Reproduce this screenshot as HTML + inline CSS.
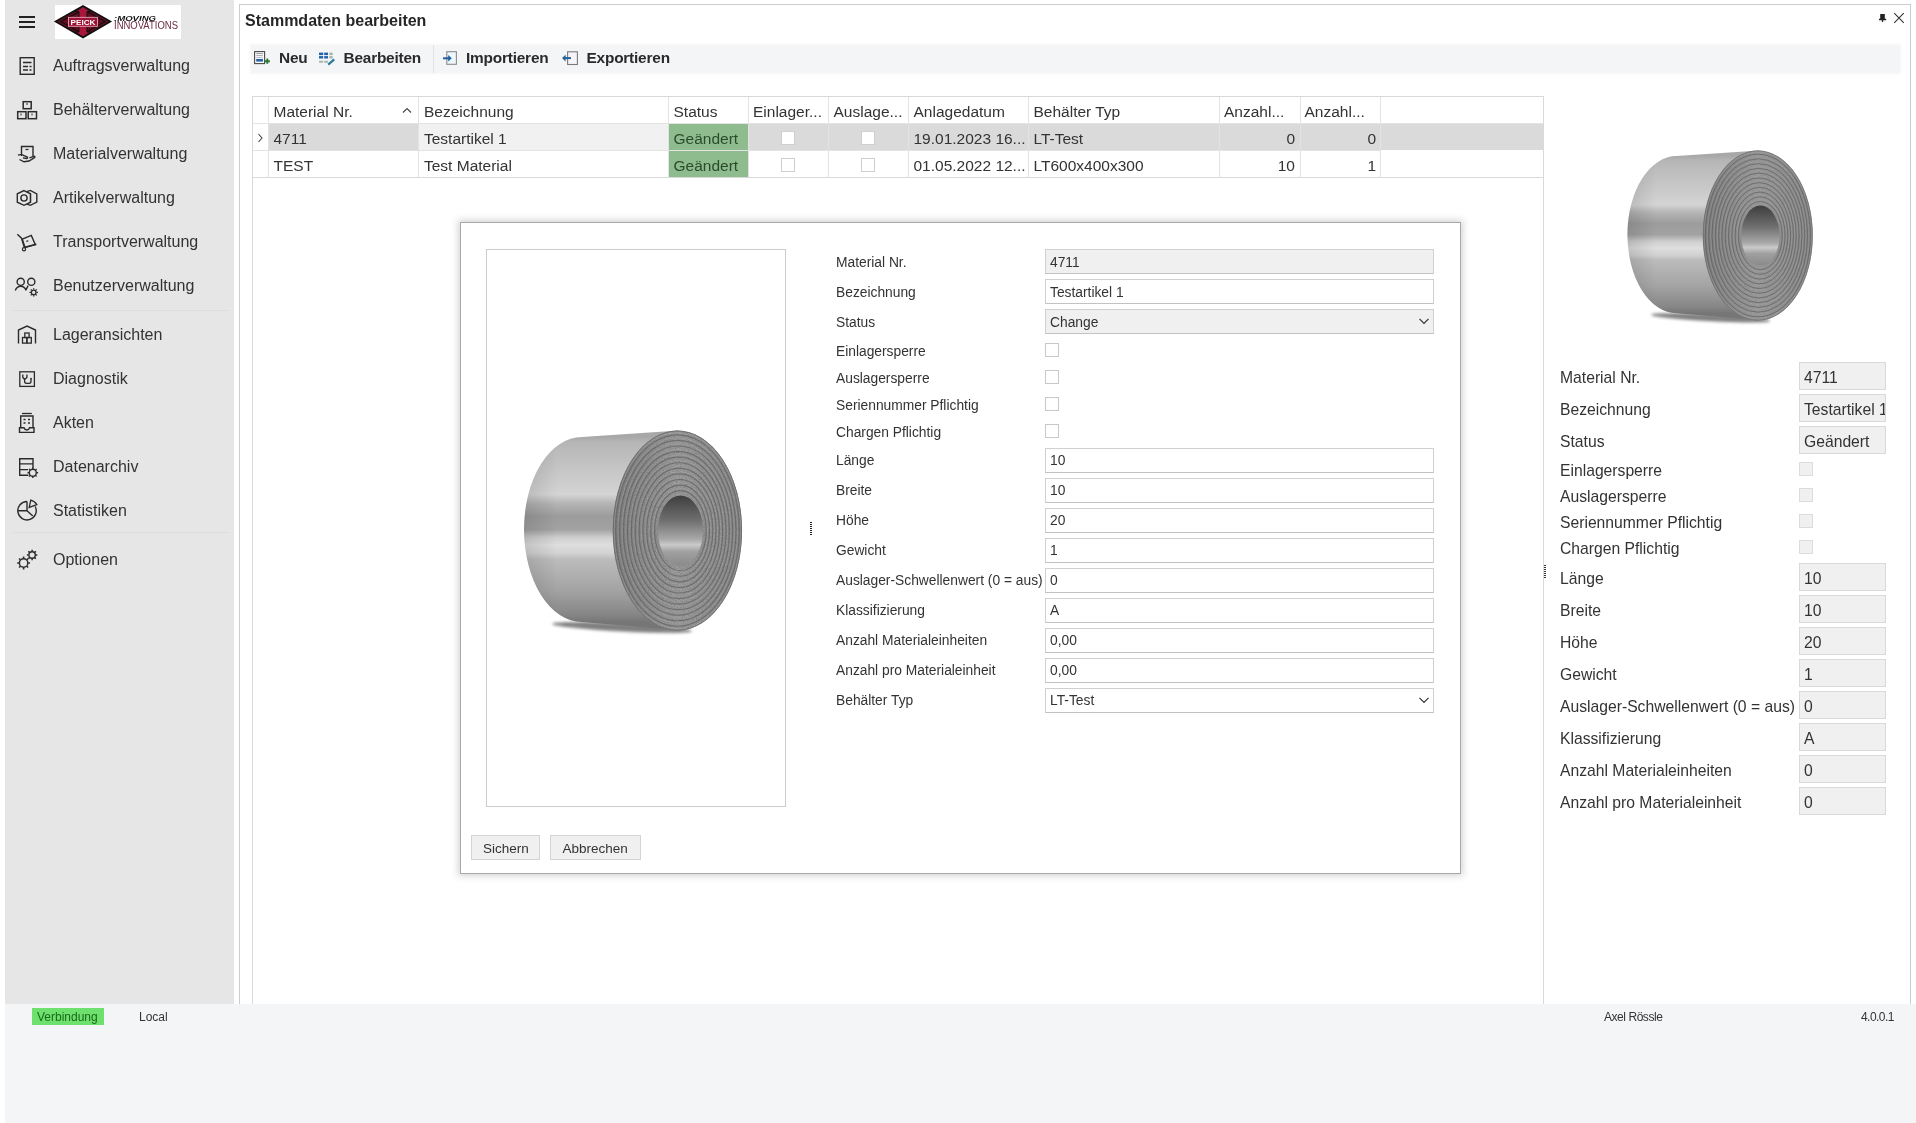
<!DOCTYPE html>
<html><head><meta charset="utf-8">
<style>
*{box-sizing:border-box;margin:0;padding:0}
html,body{width:1916px;height:1123px;overflow:hidden;background:#fff;font-family:"Liberation Sans",sans-serif;color:#333}
.a{position:absolute}
.t{position:absolute;white-space:nowrap;line-height:1}
#side{left:5px;top:0;width:229px;height:1004px;background:#e6e6e6}
.mi{font-size:16px;left:53px;color:#333}
.ico{position:absolute;left:14px;width:26px;height:24px}
.sep{position:absolute;left:13px;width:216px;height:1px;background:#dcdcdc}
#status{left:5px;top:1004px;width:1911px;height:119px;background:#f4f5f7}
.st{font-size:12px;color:#333}
/* grid */
.gl{position:absolute;background:#e3e3e3}
.gt{font-size:15.5px;color:#333}
/* dialog */
.dl{font-size:13.8px;color:#333;left:836px}
.fld{position:absolute;left:1045px;width:389px;height:25px;border:1px solid #d0d0d0;border-bottom-color:#c2c2c2;background:#fff}
.fv{font-size:13.8px;color:#333;left:1050px}
.cb{position:absolute;width:14px;height:14px;border:1px solid #c9c9c9;background:#fff}
.rl{font-size:15.7px;color:#333;left:1560px}
.rf{position:absolute;left:1799px;width:87px;height:28px;border:1px solid #d9d9d9;background:#f0f0f0}
.rv{font-size:15.7px;color:#333;left:1804px}
.rcb{position:absolute;left:1799px;width:14px;height:14px;border:1px solid #dcdcdc;background:#f0f0f0}
body{filter:contrast(1.0001)}
</style></head><body>

<!-- SIDEBAR -->
<div id="side" class="a"></div>
<div class="a" style="left:19px;top:16px;width:16px;height:2px;background:#222"></div>
<div class="a" style="left:19px;top:21px;width:16px;height:2px;background:#222"></div>
<div class="a" style="left:19px;top:26px;width:16px;height:2px;background:#222"></div>
<div class="a" style="left:55px;top:5px;width:126px;height:34px;background:#fff"></div>


<!-- SIDEBAR ICONS -->
<svg class="a" style="left:0;top:0" width="240" height="600" viewBox="0 0 240 600" fill="none" stroke="#2b2b2b" stroke-width="1.4">
 <!-- Auftrags -->
 <rect x="20.2" y="57.7" width="14" height="16.6"/>
 <path d="M23 62.5h8.5M23 66.5h5M29.5 66.5h2M23 70h5M29.5 70h2" stroke-width="1.3"/>
 <!-- Behaelter -->
 <rect x="23.2" y="101.7" width="8" height="7" stroke-width="1.5"/>
 <rect x="17.7" y="111.7" width="8.3" height="7" stroke-width="1.5"/>
 <rect x="28.2" y="111.7" width="8.3" height="7" stroke-width="1.5"/>
 <path d="M27 103v2M21 113.5v2M32 113.5v2" stroke-width="1"/>
 <!-- Material -->
 <path d="M21.5 156V146.5h11.5V156"/>
 <path d="M25.5 149.5h3" stroke-width="1.2"/>
 <path d="M18 155.2c2-0.8 4-0.8 6 0.5l3 1.2c1 .5.5 1.8-.6 1.6l-3.5-.6M19.5 159.5l4.5 2.3 5-.8 5.5-3.3c.8-.6.2-1.7-.8-1.4l-4.3 1.6"/>
 <!-- Artikel -->
 <path d="M24 190.6l6.5 3.2v8.4l-6.5 3.1-6.7-3.1v-8.4z"/>
 <circle cx="24" cy="198" r="3.1"/>
 <path d="M26.8 191.6l3.5-1.2 6.5 3.4v8.3l-6.5 3.2-3.3-1.1"/>
 <path d="M30.5 193.8v8.4" stroke-width="1.2"/>
 <!-- Transport -->
 <path d="M17.3 234.3l4.2 3.9 2.8 9.2"/>
 <path d="M22.3 239.2l9-3.8 4 9.2-10.3 2.8z"/>
 <path d="M25 247.3l11.3-3" />
 <circle cx="24" cy="249.3" r="1.6" stroke-width="1.2"/>
 <path d="M26.3 241.4l2.1-.7" stroke-width="1.2"/>
 <!-- Benutzer -->
 <circle cx="20.7" cy="281.8" r="3.6"/>
 <circle cx="31.3" cy="281.8" r="3.6"/>
 <path d="M15.3 290.5c1-2.6 3-4.2 5.4-4.2s4.4 1.6 5.4 4.2M26.1 289.6l2-4"/>
 <circle cx="33.7" cy="292.4" r="2.3" stroke-width="1.3"/>
 <path d="M33.7 288.2v1.4M33.7 295.2v1.4M29.5 292.4h1.4M36.5 292.4h1.4M30.7 289.4l1 1M35.7 294.4l1 1M30.7 295.4l1-1M35.7 290.4l1-1" stroke-width="1.3"/>
 <!-- Lager -->
 <path d="M18.5 343.5v-13.5l8.5-4 8.5 4v13.5"/>
 <rect x="22.5" y="337.5" width="4.3" height="5.6" stroke-width="1.3"/>
 <rect x="27" y="337.5" width="4.3" height="5.6" stroke-width="1.3"/>
 <rect x="24.8" y="333" width="4.3" height="4.6" stroke-width="1.3"/>
 <!-- Diagnostik -->
 <rect x="19.8" y="371.8" width="14.6" height="14.6" stroke-width="1.3"/>
 <path d="M22.8 374.6v2.9l1.8 2 2.3-2v-2.9M24.6 379.5v1.8c0 1.3.7 2 1.8 2h2.8c1.2 0 1.8-.7 1.8-2v-2.4" stroke-width="1.3"/>
 <circle cx="31" cy="378.6" r="0.9" fill="#2b2b2b" stroke="none"/>
 <!-- Akten -->
 <path d="M22 413.5h9.8" stroke-width="1.3"/>
 <path d="M20.7 428v-12h12.3v12"/>
 <path d="M19.5 427.8h4.5c.5 1.5 1.5 2.2 2.8 2.2s2.3-.7 2.8-2.2h4.4v4.6h-14.5z"/>
 <path d="M23.5 419.5h2M28 419.5h2M23.5 423h2M28 423h2" stroke-width="1.5"/>
 <!-- Datenarchiv -->
 <path d="M28.3 475.3H19.7V458.7H33V468.3M19.7 463.9H33M19.7 469.6H28"/>
 <circle cx="32.8" cy="472.8" r="3.5" stroke-width="1.4"/>
 <path d="M32.8 467.5v1.5M32.8 476.6v1.5M27.5 472.8h1.5M36.6 472.8h1.5M29 469l1 1M35.6 475.6l1 1M29 476.6l1-1M35.6 470l1-1" stroke-width="1.4"/>
 <!-- Statistiken -->
 <path d="M27 501.5A9.2 9.2 0 1 0 35.2 506.5"/>
 <path d="M27 501.5v9.2H18M27 510.7l5.8 5.4"/>
 <path d="M29.2 507.4l1.6-7.3a9.5 9.5 0 0 1 6 4.5z" stroke-width="1.3"/>
 <!-- Optionen -->
 <circle cx="23.6" cy="563" r="4.2" stroke-width="1.4"/>
 <path d="M23.6 556.6v1.8M23.6 567.6v1.8M17.2 563h1.8M28.2 563h1.8M19.1 558.5l1.3 1.3M26.8 566.2l1.3 1.3M19.1 567.5l1.3-1.3M26.8 559.8l1.3-1.3" stroke-width="1.6"/>
 <circle cx="32.1" cy="555" r="3.2" stroke-width="1.4"/>
 <path d="M32.1 549.8v1.6M32.1 558.6v1.6M26.9 555h1.6M35.7 555h1.6M28.4 551.3l1.1 1.1M34.7 557.6l1.1 1.1M28.4 558.7l1.1-1.1M34.7 552.4l1.1-1.1" stroke-width="1.5"/>
</svg>


<!-- LOGO -->
<svg class="a" style="left:0;top:0" width="200" height="45" viewBox="0 0 200 45">
 <polygon points="55.5,21.5 83,6 110.5,21.5 83,37.5" fill="#5e0f22" stroke="#111" stroke-width="1.6"/>
 <polygon points="61,21.5 83,9.5 105,21.5 83,34" fill="none" stroke="#1a0a0e" stroke-width="1.2"/>
 <polygon points="75.5,11.5 83,6.5 90.5,11.5 87,11.5 87,32 90.5,32 83,37 75.5,32 79,32 79,11.5" fill="#a8173a" stroke="#111" stroke-width="1"/>
 <rect x="68.5" y="17.3" width="29" height="9" fill="#9c1434" stroke="#f2b3c2" stroke-width="0.8"/>
 <text x="83" y="24.6" font-family="Liberation Sans" font-weight="700" font-size="6.6" fill="#fff" text-anchor="middle" textLength="25" lengthAdjust="spacingAndGlyphs">PEICK</text>
 <text x="114" y="20.9" font-family="Liberation Sans" font-style="italic" font-weight="700" font-size="7.8" fill="#111" textLength="42" lengthAdjust="spacingAndGlyphs">:MOVING</text>
 <text x="114" y="28.7" font-family="Liberation Sans" font-size="10.4" fill="#6e2a40" textLength="64" lengthAdjust="spacingAndGlyphs">INNOVATIONS</text>
</svg>
<!-- PIN / CLOSE -->
<svg class="a" style="left:1870px;top:8px" width="40" height="20" viewBox="1870 8 40 20">
 <rect x="1880.2" y="14" width="4.6" height="5" fill="#222"/>
 <path d="M1879 19.5h7.2M1882.5 19.5v2.5" stroke="#222" stroke-width="1.3"/>
 <path d="M1894.2 13.2l9.6 9.6M1903.8 13.2l-9.6 9.6" stroke="#333" stroke-width="1.1"/>
</svg>

<div class="t mi" style="top:58.0px">Auftragsverwaltung</div>
<div class="t mi" style="top:102.0px">Behälterverwaltung</div>
<div class="t mi" style="top:146.0px">Materialverwaltung</div>
<div class="t mi" style="top:190.0px">Artikelverwaltung</div>
<div class="t mi" style="top:234.0px">Transportverwaltung</div>
<div class="t mi" style="top:278.0px">Benutzerverwaltung</div>
<div class="sep" style="top:310px"></div>
<div class="t mi" style="top:327.0px">Lageransichten</div>
<div class="t mi" style="top:371.0px">Diagnostik</div>
<div class="t mi" style="top:415.0px">Akten</div>
<div class="t mi" style="top:459.0px">Datenarchiv</div>
<div class="t mi" style="top:503.0px">Statistiken</div>
<div class="sep" style="top:532px"></div>
<div class="t mi" style="top:552.0px">Optionen</div>

<!-- MAIN WINDOW -->
<div class="a" style="left:239px;top:4px;width:1672px;height:1000px;border:1px solid #cdcdcd;border-bottom:none"></div>
<div class="t" style="left:245px;top:12.5px;font-size:16px;font-weight:700;color:#262626">Stammdaten bearbeiten</div>

<!-- toolbar -->
<div class="a" style="left:251px;top:45px;width:1649px;height:28px;background:#f4f5f7;box-shadow:0 0 3px 1px rgba(0,0,0,0.035)"></div>
<div class="a" style="left:433px;top:45px;width:1px;height:28px;background:#e4e4e4"></div>
<!-- TOOLBAR ICONS -->
<svg class="a" style="left:240px;top:40px" width="360" height="35" viewBox="240 40 360 35">
 <rect x="254.6" y="51.6" width="10" height="12" fill="#fbfbfb" stroke="#4a4a4a" stroke-width="1.1"/>
 <path d="M256.3 53.6h6.6" stroke="#8c8c8c" stroke-width="0.9"/>
 <path d="M256.3 55.6h6.6" stroke="#a4a4a4" stroke-width="0.9"/>
 <path d="M256.3 57.6h6.6" stroke="#b7bde6" stroke-width="1"/>
 <rect x="256.2" y="59" width="6.8" height="2.6" fill="#2763a8"/>
 <path d="M267.3 58.6v5.2M264.7 61.2h5.2" stroke="#2a7a2e" stroke-width="1.9"/>
 <g fill="#1f62ab">
  <rect x="319" y="52.6" width="4.2" height="2.5"/><rect x="324.2" y="52.6" width="3.8" height="2.5"/>
  <rect x="319" y="56.1" width="4.2" height="2.4"/><rect x="324.2" y="56.1" width="3.8" height="2.4"/>
 </g>
 <g fill="#a9b4ae">
  <rect x="329.3" y="52.6" width="3.4" height="2.5"/><rect x="329.3" y="56.1" width="3.4" height="2.4"/>
  <rect x="319" y="60.8" width="4.2" height="1.9"/><rect x="324.2" y="60.8" width="3.8" height="1.9"/>
 </g>
 <path d="M328.2 64.6l6-5.2" stroke="#2a7d9c" stroke-width="2.3"/>
 <rect x="446.8" y="51.7" width="9.6" height="12.6" fill="#eef8fa" stroke="#8a8a8a" stroke-width="1.1"/>
 <path d="M443 58.3h6" stroke="#22609f" stroke-width="2"/>
 <path d="M448.2 55l3.6 3.3-3.6 3.3z" fill="#22609f"/>
 <rect x="567.6" y="51.8" width="9.8" height="12.7" fill="#f6f4fa" stroke="#7a7a7a" stroke-width="1.1"/>
 <path d="M565 58.1h6" stroke="#22639a" stroke-width="2"/>
 <path d="M565.6 54.8l-3.6 3.3 3.6 3.3z" fill="#22639a"/>
</svg>

<div class="t" style="left:279px;top:50px;font-size:15.4px;letter-spacing:-0.2px;font-weight:700;color:#2a2a2a">Neu</div>
<div class="t" style="left:343.5px;top:50px;font-size:15.4px;letter-spacing:-0.2px;font-weight:700;color:#2a2a2a">Bearbeiten</div>
<div class="t" style="left:466px;top:50px;font-size:15.4px;letter-spacing:-0.2px;font-weight:700;color:#2a2a2a">Importieren</div>
<div class="t" style="left:586.5px;top:50px;font-size:15.4px;letter-spacing:-0.2px;font-weight:700;color:#2a2a2a">Exportieren</div>

<!-- GRID -->
<div class="a" style="left:252px;top:96px;width:1292px;height:908px;border:1px solid #d9d9d9;border-bottom:none"></div>


<!-- GRID CONTENT -->
<div class="a" style="left:268px;top:123px;width:1275px;height:27px;background:#dadada"></div>
<div class="a" style="left:419px;top:123px;width:249px;height:27px;background:#f1f1f1"></div>
<div class="a" style="left:669px;top:123px;width:79px;height:54px;background:#8fbc8f"></div>
<div class="gl" style="left:253px;top:123px;width:1290px;height:1px"></div>
<div class="gl" style="left:253px;top:150px;width:1127px;height:1px"></div>
<div class="gl" style="left:253px;top:177px;width:1290px;height:1px;background:#d9d9d9"></div>
<div class="gl" style="left:268px;top:97px;width:1px;height:80px"></div>
<div class="gl" style="left:418px;top:97px;width:1px;height:80px"></div>
<div class="gl" style="left:668px;top:97px;width:1px;height:80px"></div>
<div class="gl" style="left:748px;top:97px;width:1px;height:80px"></div>
<div class="gl" style="left:828px;top:97px;width:1px;height:80px"></div>
<div class="gl" style="left:908px;top:97px;width:1px;height:80px"></div>
<div class="gl" style="left:1028px;top:97px;width:1px;height:80px"></div>
<div class="gl" style="left:1219px;top:97px;width:1px;height:80px"></div>
<div class="gl" style="left:1300px;top:97px;width:1px;height:80px"></div>
<div class="gl" style="left:1380px;top:97px;width:1px;height:80px"></div>
<svg class="a" style="left:252px;top:96px" width="170" height="60" fill="none" stroke="#444" stroke-width="1.1">
 <path d="M151 16.5l4-4 4 4"/>
 <path d="M6.5 38l3.5 4-3.5 4"/>
</svg>
<div class="t gt" style="left:273.5px;top:104px">Material Nr.</div>
<div class="t gt" style="left:424px;top:104px">Bezeichnung</div>
<div class="t gt" style="left:673.5px;top:104px">Status</div>
<div class="t gt" style="left:753px;top:104px">Einlager...</div>
<div class="t gt" style="left:833.5px;top:104px">Auslage...</div>
<div class="t gt" style="left:913.5px;top:104px">Anlagedatum</div>
<div class="t gt" style="left:1033.5px;top:104px">Behälter Typ</div>
<div class="t gt" style="left:1224px;top:104px">Anzahl...</div>
<div class="t gt" style="left:1304.5px;top:104px">Anzahl...</div>

<div class="t gt" style="left:273.5px;top:131px">4711</div>
<div class="t gt" style="left:424px;top:131px">Testartikel 1</div>
<div class="t gt" style="left:673.5px;top:131px;color:#2c4a2c">Geändert</div>
<div class="cb" style="left:781px;top:131px;border-color:#cfcfcf"></div>
<div class="cb" style="left:861px;top:131px;border-color:#cfcfcf"></div>
<div class="t gt" style="left:913.5px;top:131px">19.01.2023 16...</div>
<div class="t gt" style="left:1033.5px;top:131px">LT-Test</div>
<div class="t gt" style="left:1219px;top:131px;width:76px;text-align:right">0</div>
<div class="t gt" style="left:1300px;top:131px;width:76px;text-align:right">0</div>

<div class="t gt" style="left:273.5px;top:158px">TEST</div>
<div class="t gt" style="left:424px;top:158px">Test Material</div>
<div class="t gt" style="left:673.5px;top:158px;color:#2c4a2c">Geändert</div>
<div class="cb" style="left:781px;top:158px;border-color:#cfcfcf"></div>
<div class="cb" style="left:861px;top:158px;border-color:#cfcfcf"></div>
<div class="t gt" style="left:913.5px;top:158px">01.05.2022 12...</div>
<div class="t gt" style="left:1033.5px;top:158px">LT600x400x300</div>
<div class="t gt" style="left:1219px;top:158px;width:76px;text-align:right">10</div>
<div class="t gt" style="left:1300px;top:158px;width:76px;text-align:right">1</div>

<!-- DIALOG -->
<div class="a" style="left:460px;top:222px;width:1001px;height:652px;background:#fff;border:1px solid #a8a8a8;box-shadow:0 0 7px 2px rgba(0,0,0,0.17)"></div>
<div class="a" style="left:486px;top:249px;width:300px;height:558px;border:1px solid #cdcdcd"></div>
<div class="t dl" style="top:256.3px">Material Nr.</div>
<div class="t dl" style="top:286.3px">Bezeichnung</div>
<div class="t dl" style="top:316.3px">Status</div>
<div class="t dl" style="top:345.3px">Einlagersperre</div>
<div class="t dl" style="top:372.3px">Auslagersperre</div>
<div class="t dl" style="top:399.3px">Seriennummer Pflichtig</div>
<div class="t dl" style="top:426.3px">Chargen Pflichtig</div>
<div class="t dl" style="top:454.3px">Länge</div>
<div class="t dl" style="top:484.3px">Breite</div>
<div class="t dl" style="top:514.3px">Höhe</div>
<div class="t dl" style="top:544.3px">Gewicht</div>
<div class="t dl" style="top:574.3px">Auslager-Schwellenwert (0 = aus)</div>
<div class="t dl" style="top:604.3px">Klassifizierung</div>
<div class="t dl" style="top:634.3px">Anzahl Materialeinheiten</div>
<div class="t dl" style="top:664.3px">Anzahl pro Materialeinheit</div>
<div class="t dl" style="top:694.3px">Behälter Typ</div>
<div class="fld" style="top:249px;background:#f0f0f0"></div>
<div class="t fv" style="top:256.3px">4711</div>
<div class="fld" style="top:279px;background:#fff"></div>
<div class="t fv" style="top:286.3px">Testartikel 1</div>
<div class="fld" style="top:309px;background:#f0f0f0"></div>
<div class="t fv" style="top:316.3px">Change</div>
<svg class="a" style="left:1418px;top:317px" width="12" height="8" fill="none" stroke="#333" stroke-width="1.2"><path d="M1.5 1.8l4.5 4.5 4.5-4.5"/></svg>
<div class="fld" style="top:448px;background:#fff"></div>
<div class="t fv" style="top:454.3px">10</div>
<div class="fld" style="top:478px;background:#fff"></div>
<div class="t fv" style="top:484.3px">10</div>
<div class="fld" style="top:508px;background:#fff"></div>
<div class="t fv" style="top:514.3px">20</div>
<div class="fld" style="top:538px;background:#fff"></div>
<div class="t fv" style="top:544.3px">1</div>
<div class="fld" style="top:568px;background:#fff"></div>
<div class="t fv" style="top:574.3px">0</div>
<div class="fld" style="top:598px;background:#fff"></div>
<div class="t fv" style="top:604.3px">A</div>
<div class="fld" style="top:628px;background:#fff"></div>
<div class="t fv" style="top:634.3px">0,00</div>
<div class="fld" style="top:658px;background:#fff"></div>
<div class="t fv" style="top:664.3px">0,00</div>
<div class="fld" style="top:688px;background:#fff"></div>
<div class="t fv" style="top:694.3px">LT-Test</div>
<svg class="a" style="left:1418px;top:696px" width="12" height="8" fill="none" stroke="#333" stroke-width="1.2"><path d="M1.5 1.8l4.5 4.5 4.5-4.5"/></svg>
<div class="cb" style="left:1045px;top:343px"></div>
<div class="cb" style="left:1045px;top:370px"></div>
<div class="cb" style="left:1045px;top:397px"></div>
<div class="cb" style="left:1045px;top:424px"></div>
<div class="a" style="left:810px;top:522px;width:2px;height:1px;background:#222"></div><div class="a" style="left:810px;top:524px;width:2px;height:1px;background:#222"></div><div class="a" style="left:810px;top:526px;width:2px;height:1px;background:#222"></div><div class="a" style="left:810px;top:528px;width:2px;height:1px;background:#222"></div><div class="a" style="left:810px;top:530px;width:2px;height:1px;background:#222"></div><div class="a" style="left:810px;top:532px;width:2px;height:1px;background:#222"></div><div class="a" style="left:810px;top:534px;width:2px;height:1px;background:#222"></div>
<div class="a" style="left:471px;top:835px;width:69px;height:25px;background:#f0f0f0;border:1px solid #d4d4d4"></div>
<div class="a" style="left:550px;top:835px;width:91px;height:25px;background:#f0f0f0;border:1px solid #d4d4d4"></div>
<div class="t" style="left:483px;top:841.6px;font-size:13.5px;color:#333">Sichern</div>
<div class="t" style="left:562.5px;top:841.6px;font-size:13.5px;color:#333">Abbrechen</div>
<svg class="a" style="left:500px;top:410px" width="270.0" height="240.0" viewBox="0 0 270 240">
<defs>
 <linearGradient id="c1b" gradientUnits="userSpaceOnUse" x1="0" y1="27" x2="0" y2="212">
  <stop offset="0" stop-color="#a8a8a8"/>
  <stop offset="0.03" stop-color="#b6b6b6"/>
  <stop offset="0.17" stop-color="#c5c5c5"/>
  <stop offset="0.31" stop-color="#d4d4d4"/>
  <stop offset="0.36" stop-color="#b4b4b4"/>
  <stop offset="0.43" stop-color="#9c9c9c"/>
  <stop offset="0.5" stop-color="#a2a2a2"/>
  <stop offset="0.545" stop-color="#cfcfcf"/>
  <stop offset="0.585" stop-color="#dedede"/>
  <stop offset="0.63" stop-color="#d2d2d2"/>
  <stop offset="0.66" stop-color="#bcbcbc"/>
  <stop offset="0.83" stop-color="#a3a3a3"/>
  <stop offset="0.96" stop-color="#868686"/>
  <stop offset="1" stop-color="#767676"/>
 </linearGradient>
 <linearGradient id="c1l" gradientUnits="userSpaceOnUse" x1="24" y1="0" x2="120" y2="0">
  <stop offset="0" stop-color="#000" stop-opacity="0.12"/>
  <stop offset="0.35" stop-color="#000" stop-opacity="0"/>
  <stop offset="1" stop-color="#000" stop-opacity="0"/>
 </linearGradient>
 <linearGradient id="c1v" gradientUnits="userSpaceOnUse" x1="113" y1="0" x2="242" y2="0">
  <stop offset="0" stop-color="#7c7c7c"/>
  <stop offset="0.5" stop-color="#9a9a9a"/>
  <stop offset="1" stop-color="#858585"/>
 </linearGradient>
 <linearGradient id="c1h" x1="0" y1="0" x2="0" y2="1">
  <stop offset="0" stop-color="#3e3e3e"/>
  <stop offset="0.35" stop-color="#6e6e6e"/>
  <stop offset="0.62" stop-color="#a8a8a8"/>
  <stop offset="0.7" stop-color="#cacaca"/>
  <stop offset="0.8" stop-color="#a0a0a0"/>
  <stop offset="1" stop-color="#8a8a8a"/>
 </linearGradient>
 <filter id="c1f" x="-20%" y="-200%" width="140%" height="500%"><feGaussianBlur stdDeviation="4"/></filter>
 <filter id="c1n" x="0" y="0" width="100%" height="100%"><feTurbulence type="fractalNoise" baseFrequency="0.85" numOctaves="1" seed="7"/><feColorMatrix type="matrix" values="0 0 0 0 0.2  0 0 0 0 0.2  0 0 0 0 0.2  3 0 0 0 -1.35"/></filter>
 <clipPath id="c1c"><ellipse cx="177.4" cy="120.6" rx="64.6" ry="100"/></clipPath>
</defs>
<filter id="c1g" x="-20%" y="-300%" width="140%" height="700%"><feGaussianBlur stdDeviation="1.6"/></filter><ellipse cx="122" cy="217.5" rx="70" ry="4" fill="#000" opacity="0.5" filter="url(#c1g)" transform="rotate(3 122 217.5)"/>
<path d="M179 20.6L82 27A58 92.5 0 0 0 82 212L179 220.6Z" fill="url(#c1b)"/>
<path d="M179 20.6L82 27A58 92.5 0 0 0 82 212L179 220.6Z" fill="url(#c1l)"/>
<ellipse cx="177.4" cy="120.6" rx="64.6" ry="100" fill="url(#c1v)"/>
<g clip-path="url(#c1c)"><ellipse cx="180.4" cy="120.7" rx="25.8" ry="40.1" stroke="#5c5c5c" stroke-width="1.1" fill="none" opacity="0.75"/><ellipse cx="180.4" cy="120.7" rx="27.4" ry="42.5" stroke="#a8a8a8" stroke-width="0.9" fill="none" opacity="0.6"/><ellipse cx="180.1" cy="120.7" rx="29.4" ry="45.6" stroke="#5c5c5c" stroke-width="1.1" fill="none" opacity="0.75"/><ellipse cx="180.1" cy="120.7" rx="31.0" ry="48.0" stroke="#a8a8a8" stroke-width="0.9" fill="none" opacity="0.6"/><ellipse cx="179.8" cy="120.7" rx="33.0" ry="51.2" stroke="#5c5c5c" stroke-width="1.1" fill="none" opacity="0.75"/><ellipse cx="179.8" cy="120.7" rx="34.6" ry="53.6" stroke="#a8a8a8" stroke-width="0.9" fill="none" opacity="0.6"/><ellipse cx="179.5" cy="120.7" rx="36.6" ry="56.8" stroke="#5c5c5c" stroke-width="1.1" fill="none" opacity="0.75"/><ellipse cx="179.5" cy="120.7" rx="38.2" ry="59.2" stroke="#a8a8a8" stroke-width="0.9" fill="none" opacity="0.6"/><ellipse cx="179.2" cy="120.7" rx="40.2" ry="62.3" stroke="#5c5c5c" stroke-width="1.1" fill="none" opacity="0.75"/><ellipse cx="179.2" cy="120.7" rx="41.8" ry="64.7" stroke="#a8a8a8" stroke-width="0.9" fill="none" opacity="0.6"/><ellipse cx="178.9" cy="120.7" rx="43.8" ry="67.9" stroke="#5c5c5c" stroke-width="1.1" fill="none" opacity="0.75"/><ellipse cx="178.9" cy="120.7" rx="45.4" ry="70.3" stroke="#a8a8a8" stroke-width="0.9" fill="none" opacity="0.6"/><ellipse cx="178.7" cy="120.6" rx="47.4" ry="73.5" stroke="#5c5c5c" stroke-width="1.1" fill="none" opacity="0.75"/><ellipse cx="178.7" cy="120.6" rx="49.0" ry="75.9" stroke="#a8a8a8" stroke-width="0.9" fill="none" opacity="0.6"/><ellipse cx="178.4" cy="120.6" rx="51.0" ry="79.0" stroke="#5c5c5c" stroke-width="1.1" fill="none" opacity="0.75"/><ellipse cx="178.4" cy="120.6" rx="52.6" ry="81.4" stroke="#a8a8a8" stroke-width="0.9" fill="none" opacity="0.6"/><ellipse cx="178.1" cy="120.6" rx="54.6" ry="84.6" stroke="#5c5c5c" stroke-width="1.1" fill="none" opacity="0.75"/><ellipse cx="178.1" cy="120.6" rx="56.2" ry="87.0" stroke="#a8a8a8" stroke-width="0.9" fill="none" opacity="0.6"/><ellipse cx="177.8" cy="120.6" rx="58.2" ry="90.2" stroke="#5c5c5c" stroke-width="1.1" fill="none" opacity="0.75"/><ellipse cx="177.8" cy="120.6" rx="59.8" ry="92.6" stroke="#a8a8a8" stroke-width="0.9" fill="none" opacity="0.6"/><ellipse cx="177.5" cy="120.6" rx="61.8" ry="95.7" stroke="#5c5c5c" stroke-width="1.1" fill="none" opacity="0.75"/><ellipse cx="177.5" cy="120.6" rx="63.4" ry="98.1" stroke="#a8a8a8" stroke-width="0.9" fill="none" opacity="0.6"/><rect x="100" y="10" width="160" height="220" filter="url(#c1n)" opacity="0.9"/></g>
<ellipse cx="177.4" cy="120.6" rx="64.19999999999999" ry="99.6" fill="none" stroke="#6a6a6a" stroke-width="0.8"/>
<ellipse cx="180.5" cy="120.7" rx="22.5" ry="35.3" fill="url(#c1h)"/>
</svg>
<svg class="a" style="left:1607.2px;top:132.5px" width="229.5" height="204.0" viewBox="0 0 270 240">
<defs>
 <linearGradient id="c2b" gradientUnits="userSpaceOnUse" x1="0" y1="27" x2="0" y2="212">
  <stop offset="0" stop-color="#a8a8a8"/>
  <stop offset="0.03" stop-color="#b6b6b6"/>
  <stop offset="0.17" stop-color="#c5c5c5"/>
  <stop offset="0.31" stop-color="#d4d4d4"/>
  <stop offset="0.36" stop-color="#b4b4b4"/>
  <stop offset="0.43" stop-color="#9c9c9c"/>
  <stop offset="0.5" stop-color="#a2a2a2"/>
  <stop offset="0.545" stop-color="#cfcfcf"/>
  <stop offset="0.585" stop-color="#dedede"/>
  <stop offset="0.63" stop-color="#d2d2d2"/>
  <stop offset="0.66" stop-color="#bcbcbc"/>
  <stop offset="0.83" stop-color="#a3a3a3"/>
  <stop offset="0.96" stop-color="#868686"/>
  <stop offset="1" stop-color="#767676"/>
 </linearGradient>
 <linearGradient id="c2l" gradientUnits="userSpaceOnUse" x1="24" y1="0" x2="120" y2="0">
  <stop offset="0" stop-color="#000" stop-opacity="0.12"/>
  <stop offset="0.35" stop-color="#000" stop-opacity="0"/>
  <stop offset="1" stop-color="#000" stop-opacity="0"/>
 </linearGradient>
 <linearGradient id="c2v" gradientUnits="userSpaceOnUse" x1="113" y1="0" x2="242" y2="0">
  <stop offset="0" stop-color="#7c7c7c"/>
  <stop offset="0.5" stop-color="#9a9a9a"/>
  <stop offset="1" stop-color="#858585"/>
 </linearGradient>
 <linearGradient id="c2h" x1="0" y1="0" x2="0" y2="1">
  <stop offset="0" stop-color="#3e3e3e"/>
  <stop offset="0.35" stop-color="#6e6e6e"/>
  <stop offset="0.62" stop-color="#a8a8a8"/>
  <stop offset="0.7" stop-color="#cacaca"/>
  <stop offset="0.8" stop-color="#a0a0a0"/>
  <stop offset="1" stop-color="#8a8a8a"/>
 </linearGradient>
 <filter id="c2f" x="-20%" y="-200%" width="140%" height="500%"><feGaussianBlur stdDeviation="4"/></filter>
 <filter id="c2n" x="0" y="0" width="100%" height="100%"><feTurbulence type="fractalNoise" baseFrequency="0.85" numOctaves="1" seed="7"/><feColorMatrix type="matrix" values="0 0 0 0 0.2  0 0 0 0 0.2  0 0 0 0 0.2  3 0 0 0 -1.35"/></filter>
 <clipPath id="c2c"><ellipse cx="177.4" cy="120.6" rx="64.6" ry="100"/></clipPath>
</defs>
<filter id="c2g" x="-20%" y="-300%" width="140%" height="700%"><feGaussianBlur stdDeviation="1.6"/></filter><ellipse cx="122" cy="217.5" rx="70" ry="4" fill="#000" opacity="0.5" filter="url(#c2g)" transform="rotate(3 122 217.5)"/>
<path d="M179 20.6L82 27A58 92.5 0 0 0 82 212L179 220.6Z" fill="url(#c2b)"/>
<path d="M179 20.6L82 27A58 92.5 0 0 0 82 212L179 220.6Z" fill="url(#c2l)"/>
<ellipse cx="177.4" cy="120.6" rx="64.6" ry="100" fill="url(#c2v)"/>
<g clip-path="url(#c2c)"><ellipse cx="180.4" cy="120.7" rx="25.8" ry="40.1" stroke="#5c5c5c" stroke-width="1.1" fill="none" opacity="0.75"/><ellipse cx="180.4" cy="120.7" rx="27.4" ry="42.5" stroke="#a8a8a8" stroke-width="0.9" fill="none" opacity="0.6"/><ellipse cx="180.1" cy="120.7" rx="29.4" ry="45.6" stroke="#5c5c5c" stroke-width="1.1" fill="none" opacity="0.75"/><ellipse cx="180.1" cy="120.7" rx="31.0" ry="48.0" stroke="#a8a8a8" stroke-width="0.9" fill="none" opacity="0.6"/><ellipse cx="179.8" cy="120.7" rx="33.0" ry="51.2" stroke="#5c5c5c" stroke-width="1.1" fill="none" opacity="0.75"/><ellipse cx="179.8" cy="120.7" rx="34.6" ry="53.6" stroke="#a8a8a8" stroke-width="0.9" fill="none" opacity="0.6"/><ellipse cx="179.5" cy="120.7" rx="36.6" ry="56.8" stroke="#5c5c5c" stroke-width="1.1" fill="none" opacity="0.75"/><ellipse cx="179.5" cy="120.7" rx="38.2" ry="59.2" stroke="#a8a8a8" stroke-width="0.9" fill="none" opacity="0.6"/><ellipse cx="179.2" cy="120.7" rx="40.2" ry="62.3" stroke="#5c5c5c" stroke-width="1.1" fill="none" opacity="0.75"/><ellipse cx="179.2" cy="120.7" rx="41.8" ry="64.7" stroke="#a8a8a8" stroke-width="0.9" fill="none" opacity="0.6"/><ellipse cx="178.9" cy="120.7" rx="43.8" ry="67.9" stroke="#5c5c5c" stroke-width="1.1" fill="none" opacity="0.75"/><ellipse cx="178.9" cy="120.7" rx="45.4" ry="70.3" stroke="#a8a8a8" stroke-width="0.9" fill="none" opacity="0.6"/><ellipse cx="178.7" cy="120.6" rx="47.4" ry="73.5" stroke="#5c5c5c" stroke-width="1.1" fill="none" opacity="0.75"/><ellipse cx="178.7" cy="120.6" rx="49.0" ry="75.9" stroke="#a8a8a8" stroke-width="0.9" fill="none" opacity="0.6"/><ellipse cx="178.4" cy="120.6" rx="51.0" ry="79.0" stroke="#5c5c5c" stroke-width="1.1" fill="none" opacity="0.75"/><ellipse cx="178.4" cy="120.6" rx="52.6" ry="81.4" stroke="#a8a8a8" stroke-width="0.9" fill="none" opacity="0.6"/><ellipse cx="178.1" cy="120.6" rx="54.6" ry="84.6" stroke="#5c5c5c" stroke-width="1.1" fill="none" opacity="0.75"/><ellipse cx="178.1" cy="120.6" rx="56.2" ry="87.0" stroke="#a8a8a8" stroke-width="0.9" fill="none" opacity="0.6"/><ellipse cx="177.8" cy="120.6" rx="58.2" ry="90.2" stroke="#5c5c5c" stroke-width="1.1" fill="none" opacity="0.75"/><ellipse cx="177.8" cy="120.6" rx="59.8" ry="92.6" stroke="#a8a8a8" stroke-width="0.9" fill="none" opacity="0.6"/><ellipse cx="177.5" cy="120.6" rx="61.8" ry="95.7" stroke="#5c5c5c" stroke-width="1.1" fill="none" opacity="0.75"/><ellipse cx="177.5" cy="120.6" rx="63.4" ry="98.1" stroke="#a8a8a8" stroke-width="0.9" fill="none" opacity="0.6"/><rect x="100" y="10" width="160" height="220" filter="url(#c2n)" opacity="0.9"/></g>
<ellipse cx="177.4" cy="120.6" rx="64.19999999999999" ry="99.6" fill="none" stroke="#6a6a6a" stroke-width="0.8"/>
<ellipse cx="180.5" cy="120.7" rx="22.5" ry="35.3" fill="url(#c2h)"/>
</svg>
<!-- RIGHT PANEL -->
<div class="rf" style="top:362px"></div>
<div class="a" style="left:1800px;top:363px;width:85px;height:26px;overflow:hidden"><div class="t" style="left:4px;top:6.7px;font-size:15.7px;color:#333">4711</div></div>
<div class="t rl" style="top:369.7px">Material Nr.</div>
<div class="rf" style="top:394px"></div>
<div class="a" style="left:1800px;top:395px;width:85px;height:26px;overflow:hidden"><div class="t" style="left:4px;top:6.7px;font-size:15.7px;color:#333">Testartikel 1</div></div>
<div class="t rl" style="top:401.7px">Bezeichnung</div>
<div class="rf" style="top:426px"></div>
<div class="a" style="left:1800px;top:427px;width:85px;height:26px;overflow:hidden"><div class="t" style="left:4px;top:6.7px;font-size:15.7px;color:#333">Geändert</div></div>
<div class="t rl" style="top:433.7px">Status</div>
<div class="rcb" style="top:462px"></div>
<div class="t rl" style="top:462.7px">Einlagersperre</div>
<div class="rcb" style="top:488px"></div>
<div class="t rl" style="top:488.7px">Auslagersperre</div>
<div class="rcb" style="top:514px"></div>
<div class="t rl" style="top:514.7px">Seriennummer Pflichtig</div>
<div class="rcb" style="top:540px"></div>
<div class="t rl" style="top:540.7px">Chargen Pflichtig</div>
<div class="rf" style="top:563px"></div>
<div class="a" style="left:1800px;top:564px;width:85px;height:26px;overflow:hidden"><div class="t" style="left:4px;top:6.7px;font-size:15.7px;color:#333">10</div></div>
<div class="t rl" style="top:570.7px">Länge</div>
<div class="rf" style="top:595px"></div>
<div class="a" style="left:1800px;top:596px;width:85px;height:26px;overflow:hidden"><div class="t" style="left:4px;top:6.7px;font-size:15.7px;color:#333">10</div></div>
<div class="t rl" style="top:602.7px">Breite</div>
<div class="rf" style="top:627px"></div>
<div class="a" style="left:1800px;top:628px;width:85px;height:26px;overflow:hidden"><div class="t" style="left:4px;top:6.7px;font-size:15.7px;color:#333">20</div></div>
<div class="t rl" style="top:634.7px">Höhe</div>
<div class="rf" style="top:659px"></div>
<div class="a" style="left:1800px;top:660px;width:85px;height:26px;overflow:hidden"><div class="t" style="left:4px;top:6.7px;font-size:15.7px;color:#333">1</div></div>
<div class="t rl" style="top:666.7px">Gewicht</div>
<div class="rf" style="top:691px"></div>
<div class="a" style="left:1800px;top:692px;width:85px;height:26px;overflow:hidden"><div class="t" style="left:4px;top:6.7px;font-size:15.7px;color:#333">0</div></div>
<div class="t rl" style="top:698.7px">Auslager-Schwellenwert (0 = aus)</div>
<div class="rf" style="top:723px"></div>
<div class="a" style="left:1800px;top:724px;width:85px;height:26px;overflow:hidden"><div class="t" style="left:4px;top:6.7px;font-size:15.7px;color:#333">A</div></div>
<div class="t rl" style="top:730.7px">Klassifizierung</div>
<div class="rf" style="top:755px"></div>
<div class="a" style="left:1800px;top:756px;width:85px;height:26px;overflow:hidden"><div class="t" style="left:4px;top:6.7px;font-size:15.7px;color:#333">0</div></div>
<div class="t rl" style="top:762.7px">Anzahl Materialeinheiten</div>
<div class="rf" style="top:787px"></div>
<div class="a" style="left:1800px;top:788px;width:85px;height:26px;overflow:hidden"><div class="t" style="left:4px;top:6.7px;font-size:15.7px;color:#333">0</div></div>
<div class="t rl" style="top:794.7px">Anzahl pro Materialeinheit</div>
<div class="a" style="left:1544px;top:565px;width:2px;height:1px;background:#333"></div><div class="a" style="left:1544px;top:567px;width:2px;height:1px;background:#333"></div><div class="a" style="left:1544px;top:569px;width:2px;height:1px;background:#333"></div><div class="a" style="left:1544px;top:571px;width:2px;height:1px;background:#333"></div><div class="a" style="left:1544px;top:573px;width:2px;height:1px;background:#333"></div><div class="a" style="left:1544px;top:575px;width:2px;height:1px;background:#333"></div><div class="a" style="left:1544px;top:577px;width:2px;height:1px;background:#333"></div>
<!-- STATUS -->
<div id="status" class="a"></div>
<div class="a" style="left:32px;top:1008px;width:72px;height:17px;background:#6ee06e"></div>
<div class="t st" style="left:37px;top:1011px;color:#176b17">Verbindung</div>
<div class="t st" style="left:139px;top:1011px">Local</div>
<div class="t st" style="left:1604px;top:1011px;letter-spacing:-0.45px">Axel Rössle</div>
<div class="t st" style="left:1861px;top:1011px;letter-spacing:-0.55px">4.0.0.1</div>

</body></html>
